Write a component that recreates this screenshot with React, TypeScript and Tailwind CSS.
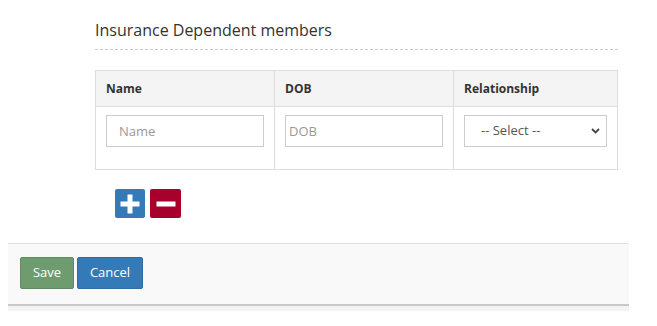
import React from "react";

export default function App() {
  const font = { fontFamily: '"Open Sans", "Liberation Sans", sans-serif' };
  return (
    <div className="w-[657px] h-[326px] bg-white overflow-hidden text-[#333]" style={font}>
      <div className="pl-[95px] pr-[39px] pt-[19px]">
        <h4 className="text-[16px] leading-[22px] text-[#333] font-normal">Insurance Dependent members</h4>
        <div className="mt-[8px] border-t border-dashed border-[#ccc]" />
        <table className="mt-[20px] w-[523px] border-collapse border border-[#ddd] text-[12px]">
          <thead>
            <tr className="bg-[#f4f4f4] h-[36px]">
              <th className="w-[179px] border border-[#ddd] text-left font-bold pl-[10px] align-middle">Name</th>
              <th className="w-[179px] border border-[#ddd] text-left font-bold pl-[10px] align-middle">DOB</th>
              <th className="border border-[#ddd] text-left font-bold pl-[10px] align-middle">Relationship</th>
            </tr>
          </thead>
          <tbody>
            <tr className="h-[63px]">
              <td className="border border-[#ddd] align-top pt-[8px] pl-[10px] pr-[10px]">
                <input
                  placeholder="Name"
                  className="w-[158px] h-[32px] border border-[#ccc] px-[12px] text-[13px] placeholder:text-[#999] outline-none"
                  style={font}
                />
              </td>
              <td className="border border-[#ddd] align-top pt-[8px] pl-[10px] pr-[10px]">
                <input
                  placeholder="DOB"
                  className="w-[158px] h-[32px] border border-[#ccc] px-[3px] text-[13px] placeholder:text-[#999] outline-none"
                  style={font}
                />
              </td>
              <td className="border border-[#ddd] align-top pt-[8px] pl-[10px] pr-[10px]">
                <div className="relative w-[143px] h-[32px] border border-[#ccc] flex items-center pl-[16px] text-[13px] text-[#555]">
                  -- Select --
                  <svg className="absolute right-[6px] top-[12px]" width="9" height="6" viewBox="0 0 9 6">
                    <path d="M1 1 L4.5 4.5 L8 1" stroke="#444" strokeWidth="1.8" fill="none" />
                  </svg>
                </div>
              </td>
            </tr>
          </tbody>
        </table>
        <div className="mt-[19px] ml-[20px] flex gap-[5px]">
          <div className="w-[30px] h-[29px] bg-[#337ab7] rounded-[2px] flex items-center justify-center">
            <svg width="20" height="20" viewBox="0 0 20 20">
              <rect x="7.5" y="0.5" width="5" height="19" fill="white" />
              <rect x="0.5" y="7.5" width="19" height="5" fill="white" />
            </svg>
          </div>
          <div className="w-[31px] h-[29px] bg-[#a8002d] rounded-[2px] flex items-center justify-center">
            <svg width="20" height="20" viewBox="0 0 20 20">
              <rect x="0.5" y="7.5" width="19" height="5" fill="white" />
            </svg>
          </div>
        </div>
      </div>
      <div className="mt-[25px] ml-[8px] w-[621px]">
        <div className="border-t border-[#e0e0e0] bg-[#f9f9f9] h-[61px] pl-[12px] pt-[13px] flex gap-[3px] items-start">
          <button className="w-[54px] h-[32px] bg-[#6f9c6f] border border-[#5e8c5e] rounded-[2px] text-white text-[13px]" style={font}>Save</button>
          <button className="w-[66px] h-[32px] bg-[#337ab7] border border-[#2e6da4] rounded-[2px] text-white text-[13px]" style={font}>Cancel</button>
        </div>
        <div className="h-[2px] bg-[#c8c8c8]" />
        <div className="h-[5px] bg-[#f3f3f3]" />
      </div>
    </div>
  );
}
